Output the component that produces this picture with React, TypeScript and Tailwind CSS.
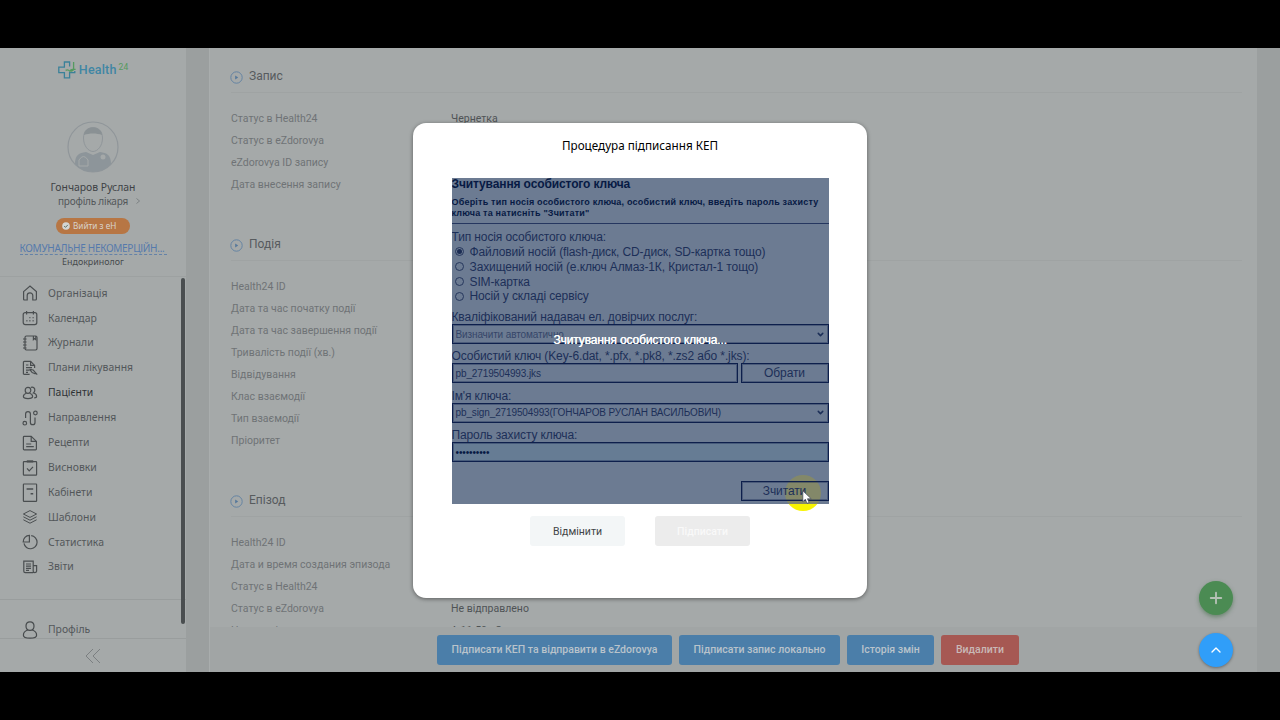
import type { ReactNode } from 'react'
import { ChevronDown, ChevronUp, Plus } from 'lucide-react'

const navItems: { label: string; active?: boolean; icon: ReactNode }[] = [
  {
    label: 'Організація',
    icon: <path d="M1.6 6.6 8 1l6.4 5.6V14q0 1-1 1h-2.6v-4.4a2.8 2.8 0 0 0-5.6 0V15H2.6q-1 0-1-1z" />,
  },
  {
    label: 'Календар',
    icon: (
      <>
        <rect x="1.2" y="2.6" width="13.6" height="12" rx="2" />
        <path d="M4.6 1v3.4M11.4 1v3.4" />
        <path d="M7.4 7.6h1M10.6 7.6h1M4.4 10.8h1M7.4 10.8h1M10.6 10.8h1" strokeWidth="1.4" />
      </>
    ),
  },
  {
    label: 'Журнали',
    icon: (
      <>
        <rect x="3" y="1" width="12" height="14" rx="1.4" />
        <path d="M1 4h3.6M1 7h3.6M1 10h3.6M1 13h3.6M11.4 1v3.6l1.2-1 1.2 1V1" />
      </>
    ),
  },
  {
    label: 'Плани лікування',
    icon: (
      <>
        <path d="M7.6 14.4H2.4q-1 0-1-1V2.4q0-1 1-1h6.2l4 4V8" />
        <path d="M8.6 1.4v4h4M4 5h2.4M4 7.6h6M4 10.2h3.6M4 12.4h2" />
        <path d="m7.6 9.4 3.6.6 4 4.6M7.6 9.4l2.6 3.2 3.4 1.4" />
      </>
    ),
  },
  {
    label: 'Пацієнти',
    active: true,
    icon: (
      <>
        <path d="M6 8.4C4.4 8.4 3.2 7 3.2 5.2S4.4 2.4 6 2.4s2.8 1.2 2.8 2.8S7.6 8.4 6 8.4z" />
        <path d="M4.4 8.2C2.4 8.8 1.4 10 1.4 11.6c0 1.6 2 2 4.6 2s4.6-.4 4.6-2C10.6 10 9.6 8.8 7.6 8.2" />
        <path d="M9 2.4c2.4-.8 4 .8 3.8 3-.1 1.2-.6 2-1.4 2.6 2.2.6 3.2 1.6 3.2 3.2 0 1-.8 1.6-2.4 1.7" />
      </>
    ),
  },
  {
    label: 'Направлення',
    icon: (
      <>
        <circle cx="2.8" cy="13.2" r="1.8" />
        <circle cx="13.4" cy="3" r="1.8" />
        <path d="M3.6 8V4a2.4 2.4 0 0 1 4.8 0v8.4a2.3 2.3 0 0 0 4.6 0V7.4" />
      </>
    ),
  },
  {
    label: 'Рецепти',
    icon: (
      <>
        <path d="M2.2 1.4h7l5.2 5V14q0 .8-.8.8H2.2q-.8 0-.8-.8V2.2q0-.8.8-.8z" />
        <path d="M9.2 1.4v5h5M4.2 9h5M4.2 11.6h7.6" />
      </>
    ),
  },
  {
    label: 'Висновки',
    icon: (
      <>
        <rect x="1.4" y="1.6" width="13.2" height="13.6" rx=".6" />
        <path d="M4.8 1.4h6.4" strokeWidth="2.2" />
        <path d="m5 8.4 2.2 2.4L11 6.8" />
      </>
    ),
  },
  {
    label: 'Кабінети',
    icon: (
      <>
        <rect x="1.4" y="-1" width="13.2" height="17.4" rx=".6" />
        <path d="M4.6 4h6.6M8.6 8.8h2.6" strokeWidth="1.5" />
      </>
    ),
  },
  {
    label: 'Шаблони',
    icon: (
      <path d="M8 1.6 14.6 5 8 8.4 1.4 5zM1.4 7.8 8 11.2l6.6-3.4M1.4 10.8 8 14.2l6.6-3.4" strokeWidth="1" />
    ),
  },
  {
    label: 'Статистика',
    icon: (
      <>
        <path d="M9.2 1.6A6.6 6.6 0 1 1 2 9.4" />
        <path d="M7.4 8H1.2A6.4 6.4 0 0 1 7.4 1.4z" />
      </>
    ),
  },
  {
    label: 'Звіти',
    icon: (
      <>
        <path d="M11.2 13.6H3.2q-1.4 0-1.4-1.4V2.2h9.4v10q0 1.4 1.6 1.4t1.8-1.4V6.6h-3.4" />
        <path d="M4 5h5M4 7.2h5M4 9.4h5M4 11.4h3" />
      </>
    ),
  },
]

const sections: { title: string; rows: [string, string?][] }[] = [
  {
    title: 'Запис',
    rows: [
      ['Статус в Health24', 'Чернетка'],
      ['Статус в eZdorovya'],
      ['eZdorovya ID запису'],
      ['Дата внесення запису'],
    ],
  },
  {
    title: 'Подія',
    rows: [
      ['Health24 ID'],
      ['Дата та час початку події'],
      ['Дата та час завершення події'],
      ['Тривалість події (хв.)'],
      ['Відвідування'],
      ['Клас взаємодії'],
      ['Тип взаємодії'],
      ['Пріоритет'],
    ],
  },
  {
    title: 'Епізод',
    rows: [
      ['Health24 ID'],
      ['Дата и время создания эпизода'],
      ['Статус в Health24'],
      ['Статус в eZdorovya', 'Не відправлено'],
      ['Назва епізоду', 'A.11.50 - Симптоми'],
    ],
  },
]

function NavIcon({ children }: { children: ReactNode }) {
  return (
    <svg viewBox="0 0 16 16" className="h-4 w-4 shrink-0 overflow-visible" fill="none" stroke="#4a4e50" strokeWidth="1.2">
      {children}
    </svg>
  )
}

function Logo() {
  return (
    <div className="flex h-6 items-center justify-center pr-[1px]">
      <svg viewBox="0 0 20 20" className="h-5 w-5" fill="none" strokeWidth="1.3">
        <path
          d="M12.6 6.6V2H7.4v5.2H1.8v3.6M1.8 9.6v3h5.6v5.2h5.2v-5.2h5.2V11"
          stroke="#3a8199"
        />
        <path d="M16.6 2v7.6l-2.4 2M18.6 9.4h-3q-2 0-2.6 2-2-2.4-4.4-1" stroke="#559a60" />
      </svg>
      <span className="ml-[2px] font-[Roboto] text-[12.5px] font-medium tracking-[0.2px] text-[#3f86a4]">Health</span>
      <span className="-mt-[6px] ml-[2px] font-[Roboto] text-[8.5px] text-[#569a5e]">24</span>
    </div>
  )
}

function Avatar() {
  return (
    <svg viewBox="0 0 52 52" className="mx-auto h-[52px] w-[52px]" fill="none">
      <circle cx="26" cy="26" r="25" stroke="#90969a" strokeWidth="1.2" />
      <path d="M8 43c0-9 4-11 11-12l7 3 7-3c7 1 11 3 11 12-4 5-11 8-18 8S12 48 8 43z" fill="#8d959a" />
      <path d="M16.5 17c0-14 19-14 19 0 0 8-5 13.5-9.5 13.5s-9.5-5.5-9.5-13.5z" fill="#a5a9a9" stroke="#90969a" />
      <path d="M17 14c0-10 18-10 18 0-5-2-13-2-18 0z" fill="#8a9194" />
      <path d="M12 39q4.5-7 9 0v6h-9z" stroke="#a5a9a9" />
      <circle cx="36" cy="36" r="2.5" fill="#a5a9a9" />
    </svg>
  )
}

function Sidebar() {
  return (
    <aside className="relative flex w-[186px] shrink-0 flex-col bg-[#a5a9a9] font-['Noto_Sans',sans-serif] text-[#53575a]">
      <div className="h-[229px] border-b border-[#9da1a1] pt-[10px] text-center">
        <Logo />
        <div className="h-[39px]" />
        <Avatar />
        <div className="mt-[7px] h-[14px] text-[10.4px] leading-[14px] text-[#3e4245]">Гончаров Руслан</div>
        <div className="flex h-[14px] items-center justify-center gap-2 pl-3 text-[10px] leading-[14px] tracking-[-0.2px]">
          <span>профіль лікаря</span>
          <svg viewBox="0 0 4 6" className="h-[6px] w-1" fill="none" stroke="#6c7072" strokeWidth=".7">
            <path d="m.5.5 3 2.5-3 2.5" />
          </svg>
        </div>
        <div className="mx-auto mt-[10px] flex h-4 w-[74px] items-center gap-[3px] rounded-full bg-[#b77644] pl-[6px] text-[8.2px] text-[#d8d3cd]">
          <svg viewBox="0 0 8 8" className="h-2 w-2">
            <circle cx="4" cy="4" r="3.8" fill="#d3d5d3" />
            <path d="m2.2 4 1.3 1.4 2.3-2.5" fill="none" stroke="#5c7064" />
          </svg>
          Вийти з еН
        </div>
        <div className="mx-auto mt-[8px] h-[13px] w-[147px] border-b border-dashed border-[#6482a8] text-left text-[10px] leading-[13px] tracking-[-0.28px] whitespace-nowrap text-[#557aac]">
          КОМУНАЛЬНЕ НЕКОМЕРЦІЙН...
        </div>
        <div className="text-[8.9px] leading-[14px] text-[#474b4d]">Ендокринолог</div>
      </div>

      <nav className="pt-[4px]">
        {navItems.map((item) => (
          <div key={item.label} className="flex h-[24.9px] items-center gap-[10px] pl-[22px]">
            <NavIcon>{item.icon}</NavIcon>
            <span className={item.active ? 'text-[10.4px] text-[#2f3336]' : 'text-[10.4px]'}>{item.label}</span>
          </div>
        ))}
      </nav>

      <div className="mt-[19px] flex h-[40px] border-t border-b border-[#999d9d] pt-[21px]">
        <div className="flex h-[18px] items-center gap-[10px] pl-[22px]">
          <svg viewBox="0 0 16 18" className="h-[18px] w-4" fill="none" stroke="#474b4d" strokeWidth="1.2">
            <path d="M8 9.4C5.6 9.4 4 7.6 4 5s1.6-4.2 4-4.2S12 2.4 12 5 10.4 9.4 8 9.4z" />
            <path d="M5.8 9C3 9.8 1.4 11.6 1.4 14.2c0 2.2 2.6 3 6.6 3s6.6-.8 6.6-3C14.6 11.6 13 9.8 10.2 9" />
          </svg>
          <span className="text-[10.4px]">Профіль</span>
        </div>
      </div>
      <svg viewBox="0 0 16 16" className="mx-auto mt-[9px] h-4 w-4" fill="none" stroke="#7b7f81">
        <path d="M8 1 1 8l7 7M15 1 8 8l7 7" />
      </svg>

      <div className="absolute top-[230px] right-[1px] h-[346px] w-1 rounded-full bg-[#4a4e50]" />
    </aside>
  )
}

function RecordPanel() {
  return (
    <main className="relative mr-[23px] ml-[23px] flex-1 overflow-hidden border-l border-[#a9adad] bg-[#a5a9a9] font-[Roboto] text-[10.5px]">
      <div className="flex flex-col gap-[33px] pt-3 pr-[15px] pl-[21px]">
        {sections.map((section) => (
          <section key={section.title}>
            <h2 className="flex h-[33px] items-center gap-[6px] border-b border-[#9fa3a3] text-[12px] text-[#575b5e]">
              <svg viewBox="0 0 13 13" className="mt-[2px] -ml-[1px] h-[13px] w-[13px]" fill="none">
                <circle cx="6.5" cy="6.5" r="5.7" stroke="#6584a3" />
                <path d="M5.2 4.4v4.2l3-2.1z" fill="#55789b" />
              </svg>
              {section.title}
            </h2>
            <div className="pt-[14px]">
              {section.rows.map(([label, value]) => (
                <div key={label} className="flex h-[22px] items-center pt-[1px]">
                  <span className="w-[220px] text-[#6f7376]">{label}</span>
                  <span className="text-[#4f5356]">{value}</span>
                </div>
              ))}
            </div>
          </section>
        ))}
      </div>

      <div className="absolute inset-x-0 bottom-0 flex h-[45px] justify-center gap-[7px] bg-[#a1a5a5] pt-2 pr-[11px] font-medium text-[#b9c3cb]">
        <button className="h-[30px] w-[235px] rounded-[3px] bg-[#4b7ea9]">Підписати КЕП та відправити в eZdorovya</button>
        <button className="h-[30px] w-[161px] rounded-[3px] bg-[#4b7ea9]">Підписати запис локально</button>
        <button className="h-[30px] w-[87px] rounded-[3px] bg-[#4b7ea9]">Історія змін</button>
        <button className="h-[30px] w-[78px] rounded-[3px] bg-[#a65853] text-[#c9b9b7]">Видалити</button>
      </div>
    </main>
  )
}

const carriers = [
  { label: 'Файловий носій (flash-диск, CD-диск, SD-картка тощо)', checked: true },
  { label: 'Захищений носій (е.ключ Алмаз-1К, Кристал-1 тощо)' },
  { label: 'SIM-картка' },
  { label: 'Носій у складі сервісу' },
]

const frameClass = 'h-5 border border-[#0d1f4c] shadow-[inset_0_0_0_1px_rgba(13,31,76,0.35)]'
const boxClass = `${frameClass} flex items-center px-[3px] text-[10px]`

function KeyForm() {
  return (
    <div className="relative h-[326px] w-[377px] overflow-hidden bg-[#6c7b92] font-['Liberation_Sans',sans-serif] text-[12px] tracking-[-0.12px] text-[#1c2f58]">
      <h3 className="h-[13px] leading-[13px] font-bold text-[#071a44]">Зчитування особистого ключа</h3>
      <p className="mt-[6px] h-[27px] border-b border-[#25365f] text-[9px] leading-[11px] font-bold tracking-[0.2px] whitespace-nowrap text-[#071a44]">
        Оберіть тип носія особистого ключа, особистий ключ, введіть пароль захисту
        <br />
        ключа та натисніть "Зчитати"
      </p>

      <div className="mt-[6px] leading-[15px]">Тип носія особистого ключа:</div>
      {carriers.map((carrier) => (
        <div key={carrier.label} className="flex h-[14.8px] items-center gap-[6px] pl-[3px]">
          <span className="mb-[1px] flex h-[9px] w-[9px] items-center justify-center rounded-full border border-[#26375d]">
            {carrier.checked && <span className="h-[5px] w-[5px] rounded-full bg-[#1c2d54]" />}
          </span>
          <span className="leading-[15px]">{carrier.label}</span>
        </div>
      ))}

      <div className="mt-[5px] flex flex-col gap-[4.3px] leading-[15px]">
        <div>
          <div className="h-[15px] pt-[1px]">Кваліфікований надавач ел. довірчих послуг:</div>
          <div className={boxClass}>
            <span className="flex-1 opacity-70">Визначити автоматично</span>
            <ChevronDown size={9} strokeWidth={4} />
          </div>
        </div>
        <div>
          <div className="h-[15px] pt-[1px]">Особистий ключ (Key-6.dat, *.pfx, *.pk8, *.zs2 або *.jks):</div>
          <div className="flex gap-[3px]">
            <div className={`${boxClass} flex-1`}>pb_2719504993.jks</div>
            <button className={`${frameClass} w-[88px]`}>Обрати</button>
          </div>
        </div>
        <div>
          <div className="h-[15px] pt-[1px]">Ім'я ключа:</div>
          <div className={boxClass}>
            <span className="flex-1">pb_sign_2719504993(ГОНЧАРОВ РУСЛАН ВАСИЛЬОВИЧ)</span>
            <ChevronDown size={9} strokeWidth={4} />
          </div>
        </div>
        <div>
          <div className="h-[15px] pt-[1px]">Пароль захисту ключа:</div>
          <div className={`${boxClass} bg-[#667c94] text-[#071a44]`}>••••••••••</div>
        </div>
      </div>

      <div className="absolute top-[297px] left-[333px] h-9 w-9 rounded-full bg-[#8d8f58]/70" />
      <div className="relative mt-[19px] flex justify-end">
        <button className={`${frameClass} w-[88px]`}>Зчитати</button>
      </div>

      <div className="absolute inset-x-0 top-[155px] text-center leading-[15px] text-white [text-shadow:0.4px_0_0_#fff]">
        Зчитування особистого ключа...
      </div>
    </div>
  )
}

function SignModal() {
  return (
    <div className="absolute top-[75px] left-[413px] flex h-[475px] w-[454px] flex-col items-center rounded-[13px] bg-white shadow-[0_1px_4px_rgba(0,0,0,0.45)]">
      <h1 className="mt-[14px] mb-[25px] h-4 font-['Noto_Sans',sans-serif] text-[11.7px] leading-4 text-black">
        Процедура підписання КЕП
      </h1>
      <div className="relative">
        <div className="absolute top-[297px] left-[333px] h-9 w-9 rounded-full bg-[#f8f400]" />
        <KeyForm />
        <svg viewBox="0 0 12 18" className="absolute top-[312px] left-[350px] h-[15px] w-[10px]">
          <path d="M1 1v13l3-3 2 5 2.5-1-2-4.5H11z" fill="#fff" stroke="#3b4154" strokeWidth=".8" />
        </svg>
      </div>
      <div className="mt-3 flex gap-[30px] font-[Roboto] text-[10.5px]">
        <button className="h-[30px] w-[95px] rounded-[3px] bg-[#f3f6f7] pt-[1px] text-[#414547]">Відмінити</button>
        <button className="h-[30px] w-[95px] rounded-[3px] bg-[#ececec] pt-[1px] font-medium text-[#f9f9f9]">Підписати</button>
      </div>
    </div>
  )
}

export default function App() {
  return (
    <div className="h-[720px] w-[1280px] overflow-hidden bg-black py-12">
      <div className="relative flex h-[624px] overflow-hidden bg-[#9b9f9f]">
        <Sidebar />
        <RecordPanel />
        <button className="absolute top-[533px] left-[1199px] flex h-[34px] w-[34px] items-center justify-center rounded-full bg-[#4b8b53] text-[#b5c1b5] shadow-[0_2px_4px_rgba(50,100,55,0.5)]">
          <Plus size={18} strokeWidth={2.5} />
        </button>
        <button className="absolute top-[585px] left-[1199px] flex h-[34px] w-[34px] items-center justify-center rounded-full bg-[#309ef9] text-white shadow-[0_1px_3px_rgba(0,0,0,0.35)]">
          <ChevronUp size={16} strokeWidth={2} />
        </button>
        <SignModal />
      </div>
    </div>
  )
}
